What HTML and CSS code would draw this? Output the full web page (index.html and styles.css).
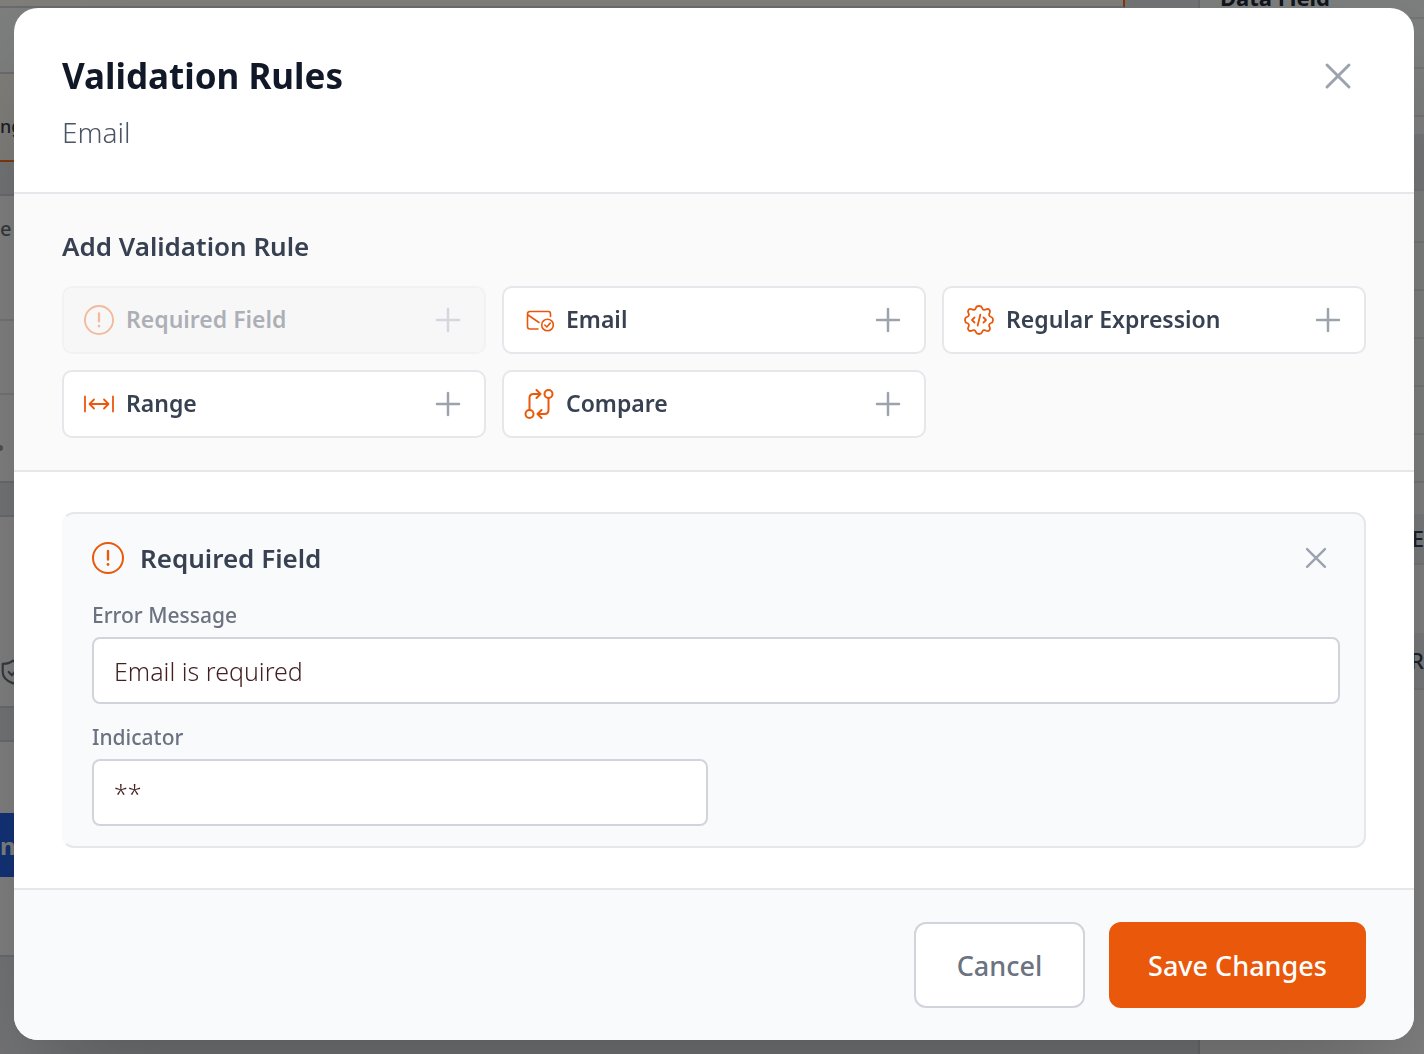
FILE: index.html
```html
<!DOCTYPE html>
<html lang="en">
<head>
<meta charset="utf-8">
<meta name="viewport" content="width=device-width, initial-scale=1">
<title>Validation Rules</title>
<link rel="stylesheet" href="styles.css">
</head>
<body>
<svg class="sprite" aria-hidden="true">
  <symbol id="i-alert" viewBox="0 0 32 32"><circle cx="16" cy="16" r="15"/><path d="M16 9v8.500" stroke-width="2.400"/><circle cx="16" cy="22.500" r="1.400" fill="currentColor" stroke="none"/></symbol>
  <symbol id="i-plus" viewBox="0 0 32 32"><path d="M16 5v22M5 16h22"/></symbol>
  <symbol id="i-close" viewBox="0 0 32 32"><path d="M5 5l22 22M27 5L5 27"/></symbol>
  <symbol id="i-mail" viewBox="0 0 30 30"><path d="M14 24H6q-2.500 0-2.500-2.500V9Q3.500 6.500 6 6.500h18.500Q26.500 6.500 26.500 9v2.500M4 10L15 17.500" stroke-width="1.600"/><circle cx="23.500" cy="20" r="5.800" stroke-width="1.600"/><path d="M20.800 20l2 2 3.400-3.900" stroke-width="1.600"/></symbol>
  <symbol id="i-regex" viewBox="0 0 30 30"><path stroke-width="1.800" d="M12 2.800Q12.500 1 15 1T18 2.800C18.600 5 20.500 5.500 22.200 4.300Q24 3.500 25.300 4.700T25.700 7.800C24.500 9.500 25 11.400 27.200 12Q29 12.500 29 15T27.200 18C25 18.600 24.500 20.500 25.700 22.200Q26.500 24 25.300 25.300T22.200 25.700C20.500 24.500 18.600 25 18 27.200Q17.500 29 15 29T12 27.200C11.400 25 9.500 24.500 7.800 25.700Q6 26.500 4.700 25.300T4.300 22.200C5.500 20.500 5 18.600 2.800 18Q1 17.500 1 15T2.800 12C5 11.400 5.500 9.500 4.300 7.800Q3.500 6 4.700 4.700T7.800 4.300C9.500 5.500 11.400 5 12 2.800ZM10.500 12.500L8 15l2.500 2.500M19.500 12.500L22 15l-2.500 2.500M16.300 9.700l-2.600 10.800"/></symbol>
  <symbol id="i-range" viewBox="0 0 30 30"><path stroke-width="1.800" d="M1 7.500v15M29 7.500v15M6 15h18M10 10.500L5.500 15l4.500 4.500M20 10.500l4.500 4.500-4.500 4.500"/></symbol>
  <symbol id="i-compare" viewBox="0 0 30 30"><circle cx="5.500" cy="25" r="4"/><circle cx="24.500" cy="5" r="4"/><path d="M5.500 21V9q0-4 4-4H16M12.500 1l4 4-4 4M24.500 9v12q0 4-4 4H14M17.500 21l-4 4 4 4"/></symbol>
  <symbol id="i-shield" viewBox="0 0 24 24"><path d="M12 1.500c3 2.500 6 3 9.500 3V12c0 5-4 8.500-9.500 10.500C6.500 20.500 2.500 17 2.500 12V4.500c3.500 0 6.500-.5 9.500-3zM8 12l3 3 5-5.500"/></symbol>
</svg>

<div class="workspace" aria-hidden="true">
  <div class="canvas">
    <div class="block topbar"></div>
    <div class="block mint"></div>
    <div class="block selected"><span>ng</span></div>
    <div class="block gap-a"></div>
    <div class="block field"><span>e</span></div>
    <div class="block row"></div>
    <div class="block row-b"><i class="dot"></i></div>
    <div class="block gap-a"></div>
    <div class="block panel"><svg class="shield"><use href="#i-shield"/></svg></div>
    <div class="block gap-a"></div>
    <div class="block submit"><span>n</span></div>
  </div>
  <div class="sidebar">
    <div class="cell heading"><strong>Data Field</strong></div>
    <div class="cell mint"></div>
    <div class="cell mint"></div>
    <div class="cell group"></div>
    <div class="cell mint"></div>
    <div class="cell mint"></div>
    <div class="cell mint"></div>
    <div class="cell mint"></div>
    <div class="cell mint"></div>
    <div class="cell mint"></div>
    <div class="cell caption first"><span>E</span></div>
    <div class="cell caption"><span>R</span></div>
  </div>
</div>

<div class="overlay">
  <form class="modal" role="dialog" aria-labelledby="title">
    <header class="modal-header">
      <div>
        <h1 id="title">Validation Rules</h1>
        <p>Email</p>
      </div>
      <button type="button" class="close" aria-label="Close"><svg><use href="#i-close"/></svg></button>
    </header>

    <section class="add">
      <h2>Add Validation Rule</h2>
      <div class="rules">
        <button type="button" class="rule" disabled><svg class="icon"><use href="#i-alert"/></svg><span>Required Field</span><svg class="plus"><use href="#i-plus"/></svg></button>
        <button type="button" class="rule"><svg class="icon"><use href="#i-mail"/></svg><span>Email</span><svg class="plus"><use href="#i-plus"/></svg></button>
        <button type="button" class="rule"><svg class="icon"><use href="#i-regex"/></svg><span>Regular Expression</span><svg class="plus"><use href="#i-plus"/></svg></button>
        <button type="button" class="rule"><svg class="icon"><use href="#i-range"/></svg><span>Range</span><svg class="plus"><use href="#i-plus"/></svg></button>
        <button type="button" class="rule"><svg class="icon"><use href="#i-compare"/></svg><span>Compare</span><svg class="plus"><use href="#i-plus"/></svg></button>
      </div>
    </section>

    <div class="body">
      <section class="active-rule">
        <div class="active-head">
          <svg class="icon"><use href="#i-alert"/></svg>
          <h2>Required Field</h2>
          <button type="button" class="close small" aria-label="Remove rule"><svg><use href="#i-close"/></svg></button>
        </div>
        <div class="fields">
          <div class="form-field wide">
            <label for="message">Error Message</label>
            <input id="message" type="text" value="Email is required">
          </div>
          <div class="form-field">
            <label for="indicator">Indicator</label>
            <input id="indicator" type="text" value="**">
          </div>
        </div>
      </section>
    </div>

    <footer class="modal-footer">
      <button type="button" class="btn cancel">Cancel</button>
      <button type="submit" class="btn save">Save Changes</button>
    </footer>
  </form>
</div>
</body>
</html>
```
FILE: styles.css
```css
* { box-sizing: border-box; }

body, h1, h2, p { margin: 0; }

body {
  font-family: "Noto Sans", sans-serif;
  color: #374151;
}

button, input { font-family: inherit; }

svg {
  fill: none;
  stroke: currentColor;
  stroke-width: 2;
  stroke-linecap: round;
  stroke-linejoin: round;
  flex: none;
}

.sprite { display: none; }

/* Form builder behind the dialog */
.workspace {
  position: fixed;
  inset: 0;
  display: grid;
  grid-template-columns: 1fr 226px;
  overflow: hidden;
  background: #fff;
}

.canvas { background: #e5e7eb; }

.block {
  display: flex;
  align-items: center;
  background: #fff;
  border-bottom: 2px solid #d1d5db;
  font-size: 18px;
  font-weight: 500;
}

.block.topbar { height: 8px; margin-right: 73px; background: #fffaf3; border-right: 2px solid #f97316; }
.block.mint { height: 66px; background: #f7fdf9; }
.block.selected { height: 88px; background: #fffaf3; border-bottom-color: #f97316; padding-bottom: 22px; align-items: flex-end; line-height: 24px; }
.block.gap-a { height: 34px; background: #e5e7eb; }
.block.field { height: 125px; padding-top: 20px; align-items: flex-start; border-color: #e5e7eb; font-size: 20px; line-height: 26px; color: #6b7280; }
.block.row { height: 74px; border-color: #e5e7eb; }
.block.row-b { height: 88px; }
.dot { width: 3px; height: 6px; margin-top: 20px; border-radius: 0 3px 3px 0; background: #9ca3af; }
.block.panel { height: 191px; padding-top: 120px; }
.shield { width: 26px; height: 26px; color: #6b7280; }
.block.submit { height: 215px; padding: 71px 0 78px; align-items: stretch; }
.block.submit span { flex: 1; background: #2563eb; color: #fff; font-size: 24px; font-weight: 700; line-height: 66px; }

.sidebar { border-left: 2px solid #d1d5db; background: #fff; }

.cell {
  height: 48px;
  border-bottom: 2px solid #e5e7eb;
}

.cell.mint { background: #f7fdf9; }
.cell.heading { display: flex; align-items: flex-end; height: 19px; padding: 0 20px 9px; background: #f7fdf9; }
.cell.heading + .cell { height: 50px; }
.cell.group + .cell { height: 52px; }
.heading strong { font-size: 22px; line-height: 22px; color: #1f2937; }
.cell.group { height: 74px; border-top: 17px solid #fff; background: #e9ebf0; }
.cell.caption { height: 74px; border-top: 17px solid #fff; background: #f0f2f5; text-align: right; font-size: 22px; font-weight: 500; line-height: 54px; }
.cell.caption.first { height: 82px; border-top-width: 31px; line-height: 48px; }
.cell.caption + .caption { margin-top: 51px; }

/* Dialog */
.overlay {
  position: relative;
  min-height: 100vh;
  padding: 8px 10px 14px 14px;
  background: rgba(0, 0, 0, 0.5);
}

.modal {
  overflow: hidden;
  border-radius: 24px;
  background: #fff;
  box-shadow: 0 50px 100px -24px rgba(0, 0, 0, 0.25);
}

.modal-header {
  display: flex;
  justify-content: space-between;
  align-items: flex-start;
  padding: 40px 48px;
  border-bottom: 2px solid #e5e7eb;
}

h1 { font-size: 35px; line-height: 56px; font-weight: 700; color: #111827; }

.modal-header p { margin-top: 8px; font-size: 28px; line-height: 40px; font-weight: 300; color: #4b5563; }

.close {
  width: 56px;
  height: 56px;
  padding: 0;
  display: grid;
  place-items: center;
  border: 0;
  background: none;
  color: #9ca3af;
}

.close svg { width: 32px; height: 32px; stroke-width: 3; }
.close.small { width: 48px; height: 40px; margin-left: auto; }
.close.small svg { width: 26px; height: 26px; }

.add {
  padding: 32px 48px;
  border-bottom: 2px solid #e5e7eb;
  background: #fafafa;
}

h2 { font-size: 26px; line-height: 40px; font-weight: 600; }

.rules {
  display: grid;
  grid-template-columns: repeat(3, 1fr);
  gap: 16px;
  margin-top: 20px;
}

.rule {
  display: flex;
  align-items: center;
  gap: 12px;
  height: 68px;
  padding: 0 20px;
  border: 2px solid #e5e7eb;
  border-radius: 10px;
  background: #fff;
  color: #374151;
  font-size: 23px;
  font-weight: 600;
  line-height: 32px;
}

.rule span { padding-bottom: 2px; }
.rule:disabled { opacity: 0.4; background: #f3f3f3; }
.icon { width: 30px; height: 30px; color: #ea580c; }
.plus { width: 32px; height: 32px; margin-left: auto; color: #9ca3af; stroke-width: 2.5; }

.body { padding: 40px 48px; }

.active-rule {
  padding: 24px 24px 20px 28px;
  border: 2px solid #e5e7eb;
  border-left-color: #f9fafb;
  border-radius: 12px;
  background: #f9fafb;
}

.active-head { display: flex; align-items: center; gap: 16px; }
.active-head .icon { width: 32px; height: 32px; }

.fields {
  display: grid;
  grid-template-columns: 1fr 1fr;
  gap: 18px 16px;
  margin-top: 22px;
}

.form-field { display: grid; gap: 7px; }
.wide { grid-column: 1 / -1; }

label { font-size: 21px; line-height: 30px; font-weight: 500; color: #6b7280; }

input {
  width: 100%;
  height: 67px;
  padding: 0 20px;
  border: 2px solid #d1d5db;
  border-radius: 8px;
  background: #fff;
  color: #431f1f;
  font-size: 25px;
  font-weight: 300;
}

.modal-footer {
  display: flex;
  justify-content: flex-end;
  gap: 24px;
  padding: 32px 48px;
  border-top: 2px solid #e5e7eb;
  background: #f9fafb;
}

.btn {
  height: 86px;
  padding: 0 36px;
  border: 2px solid #d1d5db;
  border-radius: 12px;
  background: #fff;
  color: #6b7280;
  font-size: 27px;
  font-weight: 500;
}

.cancel { min-width: 171px; }
.save { min-width: 257px; border-color: #ea580c; background: #ea580c; color: #fff; }
```
